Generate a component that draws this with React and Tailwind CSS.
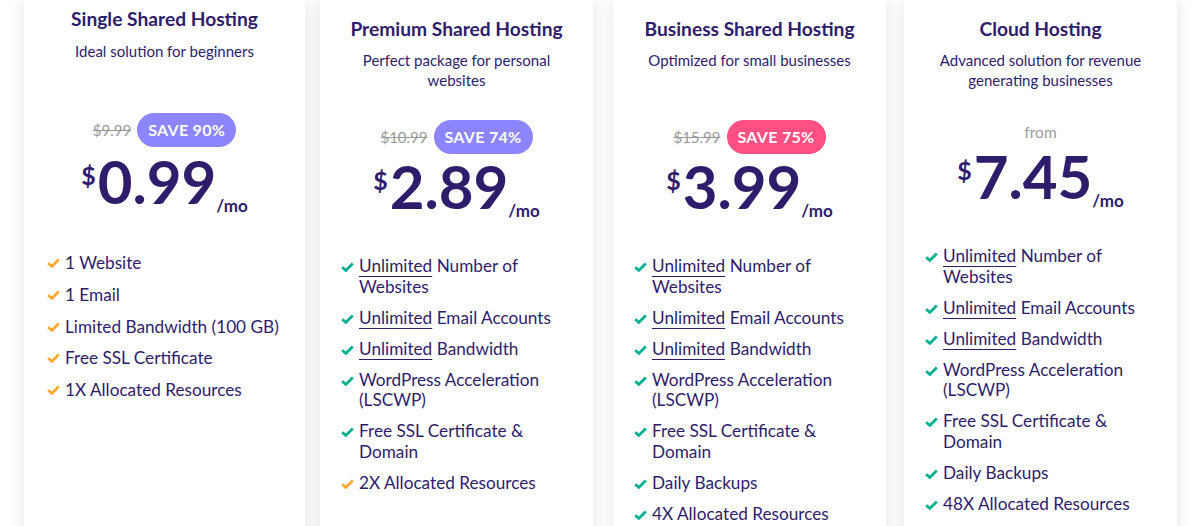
import React from 'react';

const ORANGE = '#ffa931';
const GREEN = '#00b090';

const plans = [
  {
    id: 'single',
    title: 'Single Shared Hosting',
    subtitle: ['Ideal solution for beginners'],
    old: '$9.99',
    save: 'SAVE 90%',
    badge: 'bg-[#8c85ff]',
    price: '0.99',
    features: [
      { text: '1 Website', color: ORANGE },
      { text: '1 Email', color: ORANGE },
      { text: 'Limited Bandwidth (100 GB)', color: ORANGE },
      { text: 'Free SSL Certificate', color: ORANGE },
      { text: '1X Allocated Resources', color: ORANGE },
    ],
  },
  {
    id: 'premium',
    title: 'Premium Shared Hosting',
    subtitle: ['Perfect package for personal', 'websites'],
    old: '$10.99',
    save: 'SAVE 74%',
    badge: 'bg-[#8c85ff]',
    price: '2.89',
    features: [
      { u: 'Unlimited', text: 'Number of Websites', color: GREEN },
      { u: 'Unlimited', text: 'Email Accounts', color: GREEN },
      { u: 'Unlimited', text: 'Bandwidth', color: GREEN },
      { text: 'WordPress Acceleration (LSCWP)', color: GREEN },
      { text: 'Free SSL Certificate & Domain', color: GREEN },
      { text: '2X Allocated Resources', color: ORANGE },
    ],
  },
  {
    id: 'business',
    title: 'Business Shared Hosting',
    subtitle: ['Optimized for small businesses'],
    old: '$15.99',
    save: 'SAVE 75%',
    badge: 'bg-[#ff4f83]',
    price: '3.99',
    features: [
      { u: 'Unlimited', text: 'Number of Websites', color: GREEN },
      { u: 'Unlimited', text: 'Email Accounts', color: GREEN },
      { u: 'Unlimited', text: 'Bandwidth', color: GREEN },
      { text: 'WordPress Acceleration (LSCWP)', color: GREEN },
      { text: 'Free SSL Certificate & Domain', color: GREEN },
      { text: 'Daily Backups', color: GREEN },
      { text: '4X Allocated Resources', color: GREEN },
    ],
  },
  {
    id: 'cloud',
    title: 'Cloud Hosting',
    subtitle: ['Advanced solution for revenue', 'generating businesses'],
    from: true,
    price: '7.45',
    features: [
      { u: 'Unlimited', text: 'Number of Websites', color: GREEN },
      { u: 'Unlimited', text: 'Email Accounts', color: GREEN },
      { u: 'Unlimited', text: 'Bandwidth', color: GREEN },
      { text: 'WordPress Acceleration (LSCWP)', color: GREEN },
      { text: 'Free SSL Certificate & Domain', color: GREEN },
      { text: 'Daily Backups', color: GREEN },
      { text: '48X Allocated Resources', color: GREEN },
    ],
  },
];

const Check = ({ color }) => (
  <svg width="13" height="10" viewBox="0 0 13 10" className="shrink-0 mt-[6px]">
    <path d="M1.2 5.2 L4.8 8.4 L11.8 1.4" fill="none" stroke={color} strokeWidth="2.8" strokeLinejoin="miter" />
  </svg>
);

const Card = ({ plan, first }) => (
  <div
    className={
      'bg-white shadow-[0_0_16px_rgba(0,0,0,0.11)] flex flex-col items-center h-[600px] ' +
      (first ? 'w-[281px] pt-[7px]' : 'w-[273px] pt-[17px]')
    }
  >
    <h3 className="text-[19.2px] leading-[24px] font-bold text-[#2f1c6a]">{plan.title}</h3>
    <div className={'h-[40px] text-center text-[15px] leading-[20px] text-[#2f1c6a] ' + (first ? 'mt-[10px]' : 'mt-[9px]')}>
      {plan.subtitle.map((l) => (
        <div key={l}>{l}</div>
      ))}
    </div>

    {plan.from ? (
      <div className="mt-[32px] h-[20px] text-[15.5px] leading-[20px] text-[#9b9b9b]">from</div>
    ) : (
      <div className={'flex items-center gap-[6px] ' + (first ? 'mt-[32px]' : 'mt-[30px]')}>
        <span className="text-[15px] text-[#9b9b9b] line-through">{plan.old}</span>
        <span className={'h-[34px] px-[11px] rounded-full flex items-center text-white text-[16px] font-bold tracking-[0.3px] ' + plan.badge}>
          {plan.save}
        </span>
      </div>
    )}

    <div className={'flex items-start text-[#2f1c6a] font-bold ' + (plan.from ? 'mt-[4px]' : first ? 'mt-[4px]' : 'mt-[2px]')}>
      <span className="text-[25px] leading-none mt-[12px] mr-[2px]">$</span>
      <span className="text-[60px] leading-none">{plan.price}</span>
      <span className="self-end text-[17px] leading-none mb-[-3px]">/mo</span>
    </div>

    <ul
      className={
        'self-stretch flex flex-col text-[17.2px] text-[#2f1c6a] ' +
        (first
          ? 'mt-[41px] pl-[23px] pr-[16px] gap-[10.75px] leading-[21px]'
          : 'mt-[40px] pl-[21px] pr-[29px] gap-[10.5px] leading-[20.5px]')
      }
    >
      {plan.features.map((f, i) => (
        <li key={i} className="flex items-start gap-[5px]">
          <Check color={f.color} />
          <p>
            {f.u && (
              <>
                <span className="underline decoration-1 underline-offset-[4px]">{f.u}</span>{' '}
              </>
            )}
            {f.text}
          </p>
        </li>
      ))}
    </ul>
  </div>
);

export default function App() {
  return (
    <div className="h-[526px] overflow-hidden bg-white font-['Lato',sans-serif]">
      <div className="flex items-start pl-[24px]">
        <Card plan={plans[0]} first />
        <div className="ml-[15px]">
          <Card plan={plans[1]} />
        </div>
        <div className="ml-[20px]">
          <Card plan={plans[2]} />
        </div>
        <div className="ml-[18px]">
          <Card plan={plans[3]} />
        </div>
      </div>
    </div>
  );
}
